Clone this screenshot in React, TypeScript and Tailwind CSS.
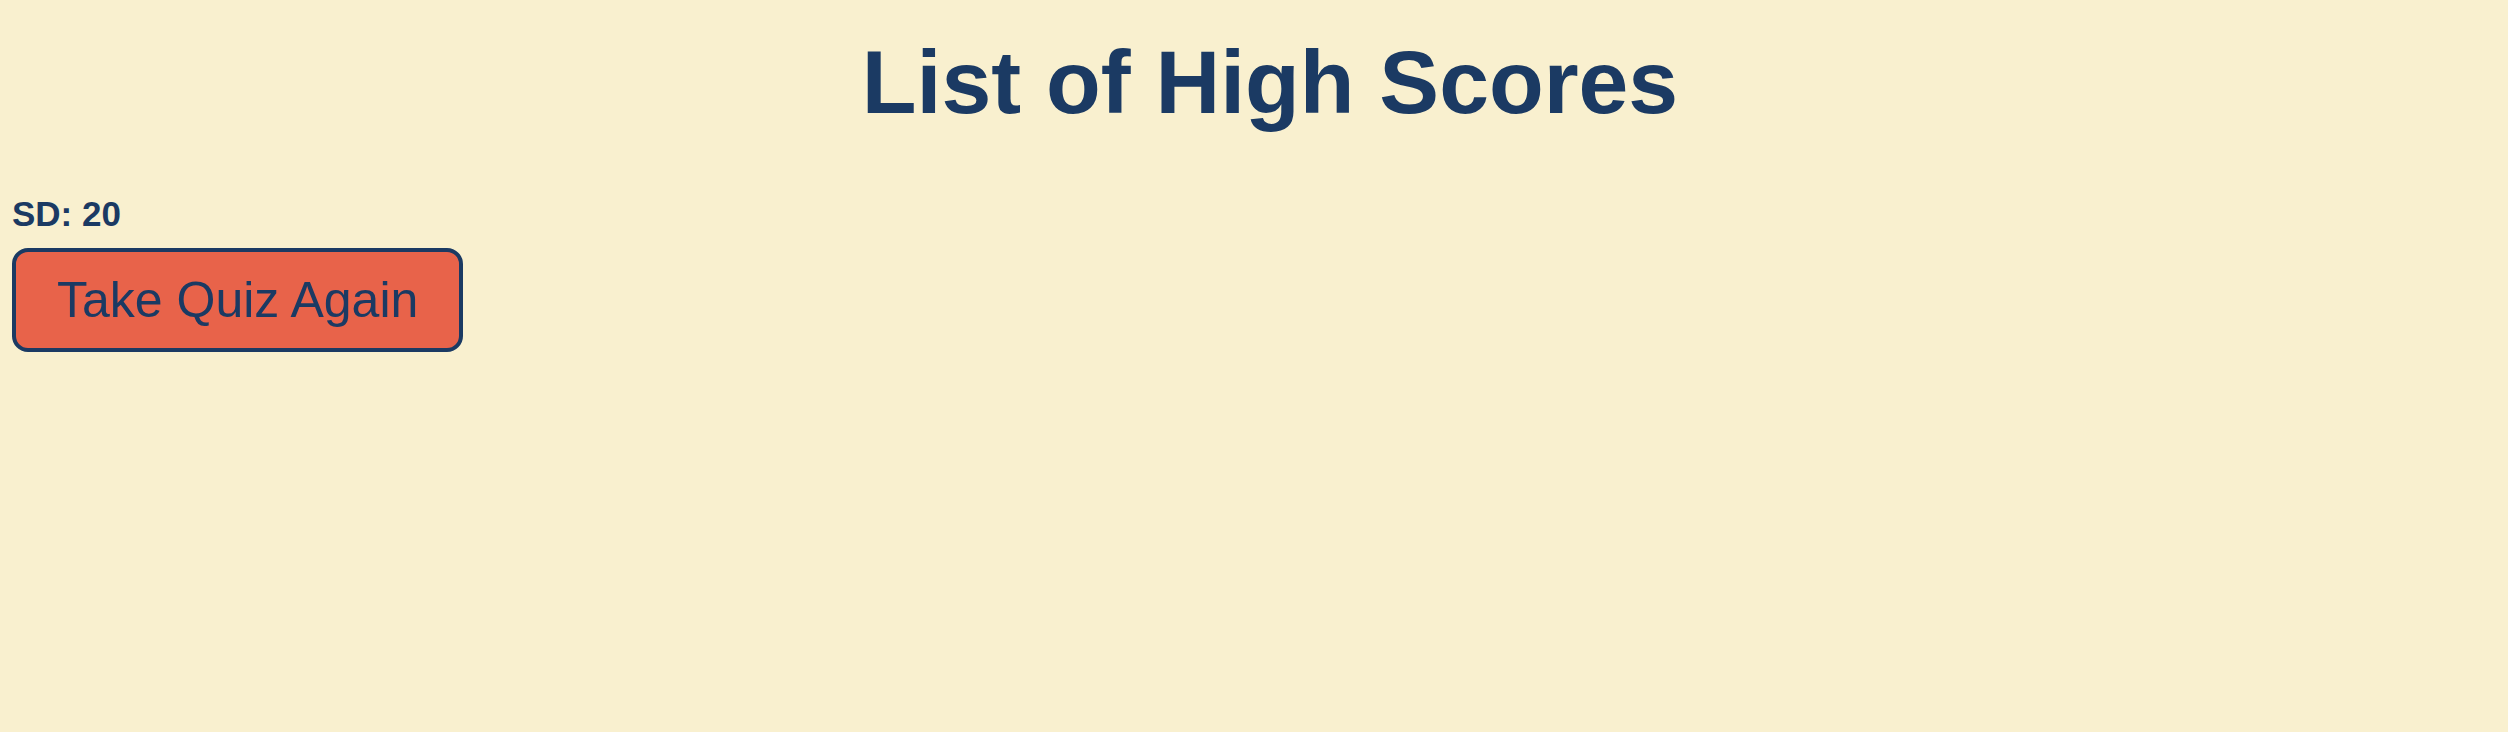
export default function App() {
  return (
    <div className="min-h-screen w-full bg-[#f9f0cf] text-[#1b3a63] font-['Liberation_Sans',Arial,sans-serif]">
      <h1 className="pl-[32px] pt-[31px] text-center text-[89.6px] font-bold leading-[103px]">
        List of High Scores
      </h1>

      <div className="px-[12px] pt-[60px]">
        <p className="text-[35px] font-bold leading-[39px]">SD: 20</p>
        <button
          type="button"
          className="mt-[15px] rounded-[16px] border-4 border-[#1b3a63] bg-[#e8634a] px-[41px] pt-[19px] pb-[18px] text-[50px] leading-[59px] text-[#1b3a63]"
        >
          Take Quiz Again
        </button>
      </div>
    </div>
  );
}
